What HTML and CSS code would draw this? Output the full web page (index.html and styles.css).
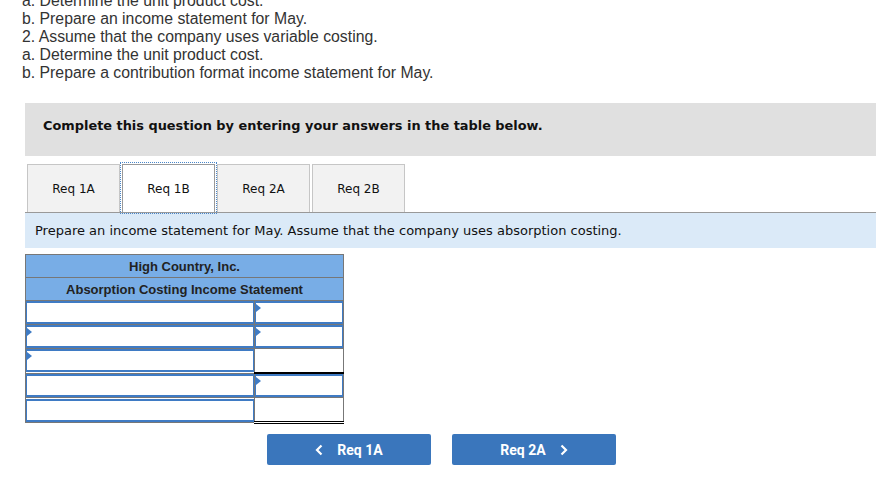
FILE: index.html
```html
<!DOCTYPE html>
<html lang="en">

<head>
    <meta charset="UTF-8">
    <title>Absorption Costing</title>
    <link rel="stylesheet" href="styles.css">
</head>

<body>
    <div class="problem">
        <p>a. Determine the unit product cost.</p>
        <p>b. Prepare an income statement for May.</p>
        <p>2. Assume that the company uses variable costing.</p>
        <p>a. Determine the unit product cost.</p>
        <p>b. Prepare a contribution format income statement for May.</p>
    </div>

    <div class="notice">Complete this question by entering your answers in the table below.</div>

    <div class="tabs">
        <div class="tab">Req 1A</div>
        <div class="tab active">Req 1B</div>
        <div class="tab">Req 2A</div>
        <div class="tab">Req 2B</div>
    </div>

    <div class="instruction">Prepare an income statement for May. Assume that the company uses absorption costing.</div>

    <table class="statement">
        <tr><th colspan="2">High Country, Inc.</th></tr>
        <tr><th colspan="2">Absorption Costing Income Statement</th></tr>
        <tr>
            <td class="label"><div class="field"></div></td>
            <td class="amount"><div class="field pick"></div></td>
        </tr>
        <tr>
            <td class="label"><div class="field pick"></div></td>
            <td class="amount"><div class="field pick"></div></td>
        </tr>
        <tr>
            <td class="label"><div class="field pick"></div></td>
            <td class="amount plain"></td>
        </tr>
        <tr>
            <td class="label"><div class="field"></div></td>
            <td class="amount"><div class="field pick"></div></td>
        </tr>
        <tr>
            <td class="label"><div class="field"></div></td>
            <td class="amount total"></td>
        </tr>
    </table>

    <div class="nav">
        <button class="nav-btn">
            <svg class="chev" width="8" height="12" viewBox="0 0 8 12"><path d="M6.5 1.5 2 6l4.5 4.5" fill="none" stroke="#fff" stroke-width="2.2"/></svg>
            Req 1A
        </button>
        <button class="nav-btn">
            Req 2A
            <svg class="chev" width="8" height="12" viewBox="0 0 8 12"><path d="M1.5 1.5 6 6l-4.5 4.5" fill="none" stroke="#fff" stroke-width="2.2"/></svg>
        </button>
    </div>
</body>

</html>
```

FILE: styles.css
```css
body {
    margin: 0;
    font-family: "Liberation Sans", Arial, sans-serif;
    background-color: #fff;
    color: #333;
}

.problem {
    margin-top: -8px;
    padding-left: 22px;
    font-size: 15.8px;
    line-height: 18px;
}

.problem p {
    margin: 0;
}

.notice {
    margin: 21px 0 0 25px;
    width: 833px;
    height: 45px;
    padding: 0 0 8px 18px;
    background-color: #e0e0e0;
    display: flex;
    align-items: center;
    font-family: "DejaVu Sans", Verdana, sans-serif;
    font-size: 12.9px;
    font-weight: bold;
    color: #111;
}

.tabs {
    margin: 8px 0 0 25px;
    width: 849px;
    padding-left: 2px;
    display: flex;
    gap: 2px;
    border-bottom: 1px solid #999;
}

.tab {
    width: 91px;
    height: 46px;
    padding-top: 1px;
    box-sizing: content-box;
    display: flex;
    align-items: center;
    justify-content: center;
    background-color: #f2f2f2;
    border: 1px solid #c6c6c6;
    border-bottom: none;
    font-family: "DejaVu Sans", Verdana, sans-serif;
    font-size: 12px;
    color: #111;
}

.tab.active {
    background-color: #fff;
    border-color: #999;
    outline: 1px dotted #4a86c8;
    outline-offset: 1px;
}

.instruction {
    margin-left: 25px;
    width: 841px;
    height: 35px;
    padding-left: 10px;
    background-color: #dbeaf8;
    display: flex;
    align-items: center;
    font-family: "DejaVu Sans", Verdana, sans-serif;
    font-size: 13px;
    color: #111;
}

.statement {
    margin: 6px 0 0 25px;
    width: 319px;
    border-collapse: collapse;
    border: 1px solid #777;
}

.statement th {
    height: 22px;
    padding: 0;
    background-color: #78ade6;
    border: 1px solid #777;
    font-size: 13px;
    color: #222;
}

.statement td {
    height: 23px;
    padding: 0;
    border: 1px solid #777;
    background-color: #fff;
}

.statement .label {
    width: 228px;
}

.field {
    position: relative;
    height: 23px;
    border: 1px solid #3f7bc4;
    border-width: 2px 1px;
    box-sizing: border-box;
}

.field.pick::before {
    content: "";
    position: absolute;
    left: 0;
    top: 1px;
    border-left: 5px solid #3f7bc4;
    border-top: 4px solid transparent;
    border-bottom: 4px solid transparent;
}

.statement .plain {
    border-bottom: 2px solid #000;
}

.statement .total {
    border-bottom: 3px double #000;
}

.nav {
    margin: 10px 0 0 267px;
    display: flex;
    gap: 21px;
}

.nav-btn {
    width: 164px;
    height: 31px;
    border: none;
    border-radius: 2px;
    background-color: #3a76bc;
    color: #fff;
    font-family: Roboto, Arial, sans-serif;
    font-size: 14px;
    font-weight: bold;
    display: flex;
    align-items: center;
    justify-content: center;
    gap: 14px;
}
```
